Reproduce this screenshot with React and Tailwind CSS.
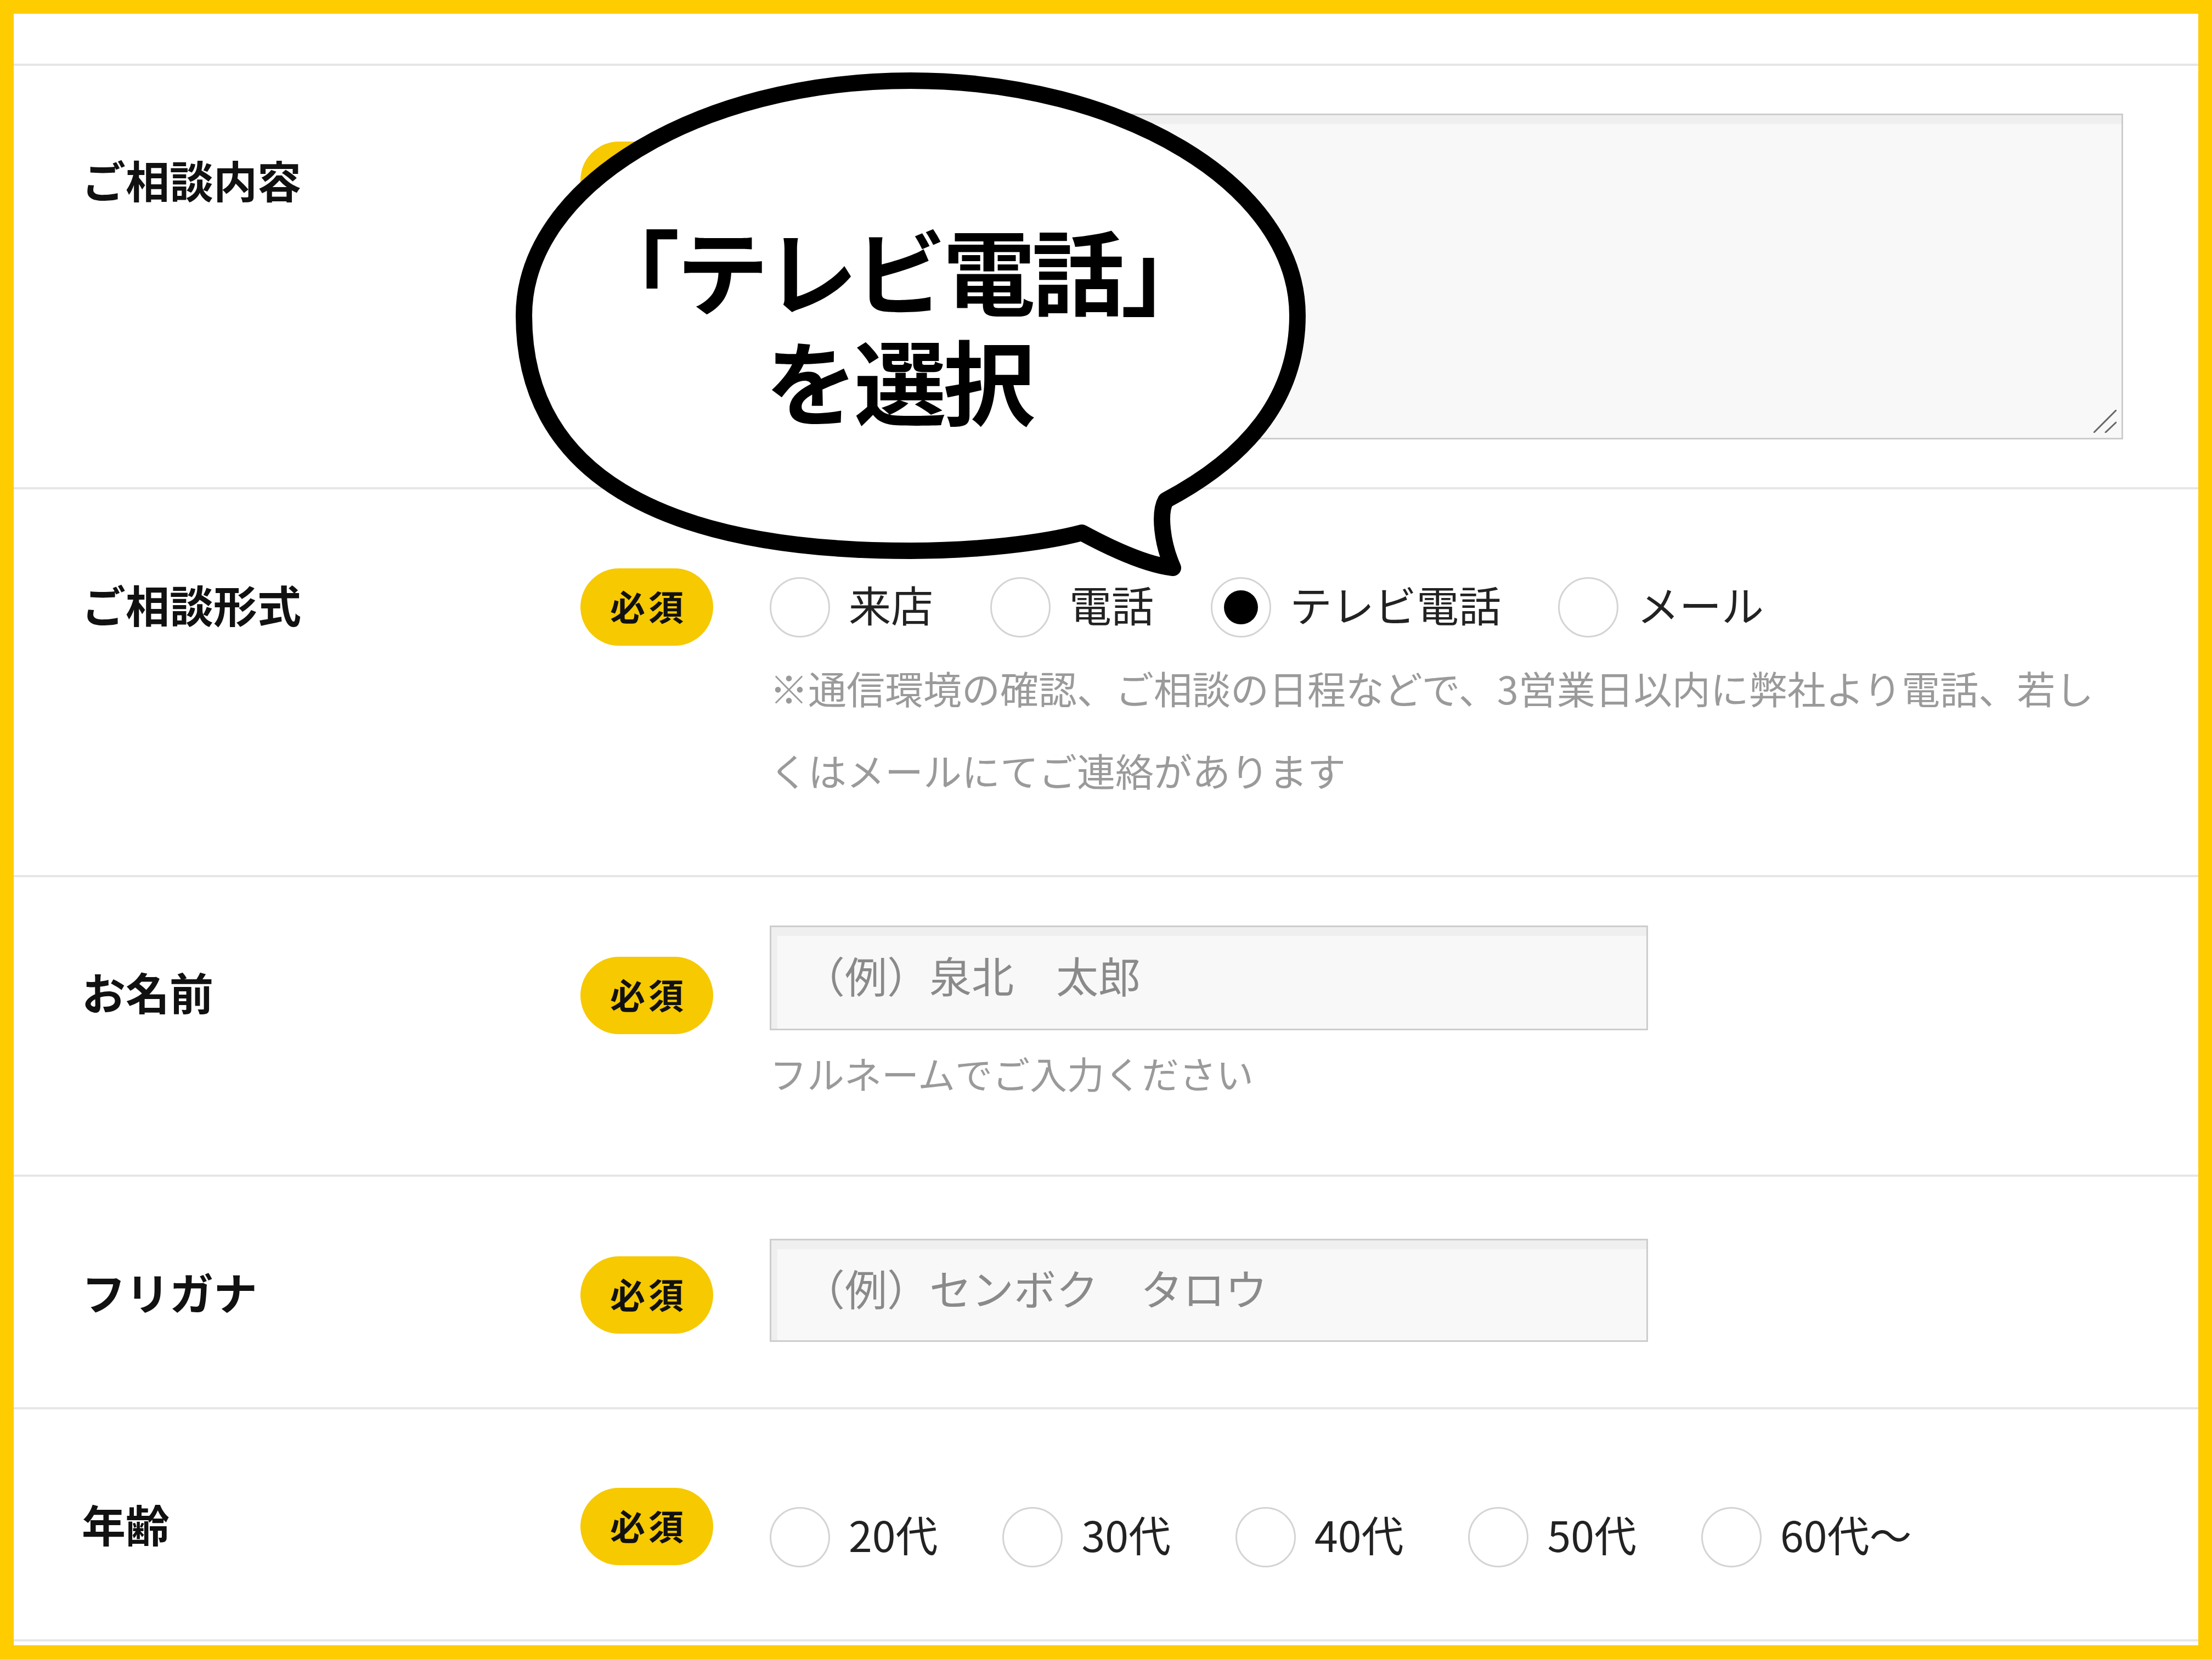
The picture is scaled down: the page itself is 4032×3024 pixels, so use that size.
import React from "react";

// 必須バッジ
const Badge = ({ className = "" }) => (
    <div
        className={`flex h-[141px] w-[242px] shrink-0 items-center justify-center rounded-full bg-[#f6c900] pb-[8px] pl-[6px] text-[64px] font-bold leading-none tracking-[6px] text-[#111] ${className}`}
    >
        必須
    </div>
);

const Radio = ({ label, checked = false }) => (
    <div className="flex items-center gap-[34px]">
        <span className="flex h-[110px] w-[110px] shrink-0 items-center justify-center rounded-full border-[3px] border-[#d4d4d4] bg-white">
            {checked && <span className="h-[62px] w-[62px] rounded-full bg-black" />}
        </span>
        <span className="mb-[12px] text-[77px] leading-none whitespace-nowrap text-[#222]">{label}</span>
    </div>
);

const TextBox = ({ placeholder, height }) => (
    <div
        className={`flex w-[1601px] items-center border-[3px] border-[#cdcdcd] bg-[#f8f8f8] pb-[12px] pl-[57px] text-[77px] leading-none text-[#8a8a8a] shadow-[inset_11px_16px_0_#efefef] ${height}`}
    >
        {placeholder}
    </div>
);

const Label = ({ children, className = "" }) => (
    <div className={`w-[909px] shrink-0 text-[80px] font-bold leading-[80px] text-[#111] ${className}`}>
        {children}
    </div>
);

const rowBase = "flex border-b-4 border-[#e6e6e6] pl-[124px]";

export default function App() {
    return (
        <div className="relative h-[3024px] w-[4032px] bg-[#ffcc00] p-[25px] font-['Noto_Sans_CJK_JP','Noto_Sans',sans-serif]">
            <div className="h-full w-full bg-white">
                <div className="h-[95px] border-b-4 border-[#e6e6e6]" />

                {/* ご相談内容 */}
                <div className={`${rowBase} h-[772px] pt-[87px]`}>
                    <Label className="mt-[79px]">ご相談内容</Label>
                    <Badge className="mt-[51px]" />
                    <div className="relative ml-[103px] h-[594px] w-[2467px] border-[3px] border-[#cdcdcd] bg-[#f8f8f8] shadow-[inset_11px_16px_0_#efefef]">
                        <svg
                            className="absolute right-[9px] bottom-[9px] h-[42px] w-[42px]"
                            viewBox="0 0 42 42"
                            fill="none"
                            stroke="#666"
                            strokeWidth="3"
                            strokeLinecap="round"
                        >
                            <line x1="1" y1="41" x2="41" y2="1" />
                            <line x1="22" y1="41" x2="41" y2="23" />
                        </svg>
                    </div>
                </div>

                {/* ご相談形式 */}
                <div className={`${rowBase} h-[707px] pt-[144px]`}>
                    <Label className="mt-[24px]">ご相談形式</Label>
                    <Badge />
                    <div className="ml-[103px] w-[2467px]">
                        <div className="flex h-[141px] items-center gap-[104px]">
                            <Radio label="来店" />
                            <Radio label="電話" />
                            <Radio label="テレビ電話" checked />
                            <Radio label="メール" />
                        </div>
                        <p className="mt-[2px] text-[70px] leading-[150px] text-[#9a9a9a]">
                            ※通信環境の確認、ご相談の日程などで、3営業日以内に弊社より電話、若しくはメールにてご連絡があります
                        </p>
                    </div>
                </div>

                {/* お名前 */}
                <div className={`${rowBase} h-[546px] pt-[88px]`}>
                    <Label className="mt-[79px]">お名前</Label>
                    <Badge className="mt-[57px]" />
                    <div className="ml-[103px]">
                        <TextBox placeholder="（例）泉北　太郎" height="h-[191px]" />
                        <p className="mt-[28px] text-[68px] leading-[100px] text-[#9a9a9a]">フルネームでご入力ください</p>
                    </div>
                </div>

                {/* フリガナ */}
                <div className={`${rowBase} h-[424px] pt-[113px]`}>
                    <Label className="mt-[55px]">フリガナ</Label>
                    <Badge className="mt-[32px]" />
                    <div className="ml-[103px]">
                        <TextBox placeholder="（例）センボク　タロウ" height="h-[188px]" />
                    </div>
                </div>

                {/* 年齢 */}
                <div className={`${rowBase} h-[423px] pt-[143px]`}>
                    <Label className="mt-[24px]">年齢</Label>
                    <Badge />
                    <div className="ml-[103px] mt-[34px] flex h-[111px] items-center gap-[118px]">
                        <Radio label="20代" />
                        <Radio label="30代" />
                        <Radio label="40代" />
                        <Radio label="50代" />
                        <Radio label="60代～" />
                    </div>
                </div>
            </div>

            {/* 吹き出し */}
            <svg
                className="pointer-events-none absolute top-0 left-0 h-[3024px] w-[4032px]"
                viewBox="0 0 4032 3024"
            >
                <path
                    d="M 1660 147
                       C 2048 147 2365 340 2365 575
                       C 2365 720 2280 830 2125 912
                       C 2112 935 2118 990 2138 1035
                       C 2095 1030 2035 1005 1972 971
                       C 1900 990 1780 1004 1660 1004
                       C 1195 1004 955 858 955 575
                       C 955 340 1272 147 1660 147 Z"
                    fill="#fff"
                    stroke="#000"
                    strokeWidth="30"
                    strokeLinejoin="round"
                />
            </svg>
            <p className="absolute top-[388px] left-[1038px] w-[1200px] text-center text-[168px] font-bold leading-[201px] tracking-[-6px] text-black">
                「テレビ電話」
                <br />
                を選択
            </p>
        </div>
    );
}
